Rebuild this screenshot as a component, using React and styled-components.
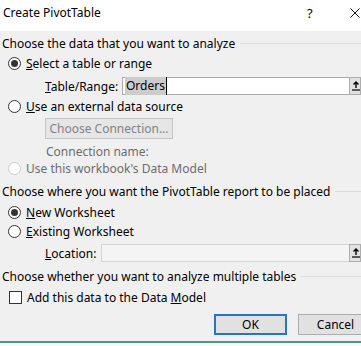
import styled, { createGlobalStyle } from 'styled-components'

const GlobalStyle = createGlobalStyle`
  html, body {
    margin: 0;
    padding: 0;
    background: #ffffff;
  }
  body {
    font-family: 'Noto Sans', 'Open Sans', sans-serif;
    font-size: 12px;
    color: #000000;
  }
`

const Dialog = styled.div`
  width: 361px;
  height: 346px;
  overflow: hidden;
  display: flex;
  flex-direction: column;
  background: #ffffff;
`

const TitleBar = styled.div`
  height: 31px;
  display: flex;
  align-items: center;
  padding: 0 0 6px 3px;
  box-sizing: border-box;
  background: #ffffff;
`

const Title = styled.div`
  flex: 1;
  font-size: 12px;
`

const HelpButton = styled.div`
  width: 10px;
  margin-right: 33px;
  font-size: 13px;
`

const CloseButton = styled.div`
  width: 10px;
  height: 10px;
  margin-right: 1px;
  display: flex;
`

const Body = styled.div`
  background: #f0f0f0;
  display: flex;
  flex-direction: column;
  flex: 1;
`

const Heading = styled.div`
  height: 24px;
  margin-top: ${p => p.$top || 0}px;
  display: flex;
  align-items: center;
  padding-left: 2px;
  white-space: nowrap;

  &::after {
    content: '';
    flex: 1;
    height: 1px;
    background: #dcdcdc;
    margin-left: 5px;
  }
`

const Row = styled.div`
  height: ${p => p.$h || 16}px;
  margin-top: ${p => p.$top || 0}px;
  padding-left: ${p => p.$indent || 8}px;
  display: flex;
  align-items: center;
  white-space: nowrap;
  color: ${p => (p.$disabled ? '#6d6d6d' : '#000000')};
`

const Radio = styled.span`
  width: 13px;
  height: 13px;
  box-sizing: border-box;
  border-radius: 50%;
  border: 1px solid ${p => (p.$disabled ? '#cccccc' : '#333333')};
  background: #ffffff;
  margin-right: 5px;
  display: flex;
  align-items: center;
  justify-content: center;

  &::after {
    content: '';
    width: 7px;
    height: 7px;
    border-radius: 50%;
    background: #333333;
    display: ${p => (p.$checked ? 'block' : 'none')};
  }
`

const Checkbox = styled.span`
  width: 13px;
  height: 13px;
  box-sizing: border-box;
  border: 1px solid #333333;
  background: #ffffff;
  margin: 0 5px 0 1px;
`

const FieldLabel = styled.span`
  width: ${p => p.$w}px;
`

const Field = styled.div`
  flex: 1;
  height: 100%;
  box-sizing: border-box;
  border: 1px solid ${p => (p.$disabled ? '#d4d4d4' : '#ababab')};
  border-right: none;
  background: ${p => (p.$disabled ? '#f4f4f4' : '#ffffff')};
  display: flex;
  align-items: center;
  padding-left: 2px;
`

const Selected = styled.span`
  background: #cccccc;
  padding: 0 1px 1px;
  border-right: 1px solid #000000;
`

const RangeButton = styled.div`
  width: 12px;
  height: 100%;
  box-sizing: border-box;
  border: 1px solid #adadad;
  background: #e1e1e1;
  display: flex;
  align-items: center;
  padding-left: 2px;
`

const PushButton = styled.div`
  width: ${p => p.$w}px;
  height: ${p => p.$h || 21}px;
  box-sizing: border-box;
  display: flex;
  align-items: center;
  justify-content: center;
  background: ${p => (p.$disabled ? '#e6e6e6' : '#e1e1e1')};
  border: ${p => (p.$default ? '2px solid #2b74bf' : p.$disabled ? '1px solid #c4c4c4' : '1px solid #adadad')};
  color: ${p => (p.$disabled ? '#838383' : '#000000')};
  flex-shrink: 0;
`

const ButtonBar = styled.div`
  margin-top: 9px;
  display: flex;
  gap: 11px;
  padding-left: 214px;
`

const BottomEdge = styled.div`
  margin-top: 6px;
  height: 2px;
  background: #5f918c;
`

const Tail = styled.div`
  flex: 1;
  background: #f7f9f8;
`

const CollapseIcon = () => (
  <svg width="8" height="10" viewBox="0 0 8 10">
    <path d="M4 1 L4 7 M1.5 3.5 L4 1 L6.5 3.5" stroke="#000" strokeWidth="1.4" fill="none" />
    <path d="M0 9 H8" stroke="#000" strokeWidth="1.2" />
  </svg>
)

export default function App() {
  return (
    <Dialog>
      <GlobalStyle />
      <TitleBar>
        <Title>Create PivotTable</Title>
        <HelpButton>?</HelpButton>
        <CloseButton>
          <svg width="10" height="10" viewBox="0 0 10 10">
            <path d="M0.5 0.5 L9.5 9.5 M9.5 0.5 L0.5 9.5" stroke="#111" strokeWidth="1" />
          </svg>
        </CloseButton>
      </TitleBar>
      <Body>
        <Heading>Choose the data that you want to analyze</Heading>
        <Row>
          <Radio $checked />
          <span><u>S</u>elect a table or range</span>
        </Row>
        <Row $h={18} $top={6} $indent={45}>
          <FieldLabel $w={77}><u>T</u>able/Range:</FieldLabel>
          <Field>
            <Selected>Orders</Selected>
          </Field>
          <RangeButton><CollapseIcon /></RangeButton>
        </Row>
        <Row $top={3}>
          <Radio />
          <span><u>U</u>se an external data source</span>
        </Row>
        <Row $h={21} $top={4} $indent={45}>
          <PushButton $w={128} $disabled>Choose Connection...</PushButton>
        </Row>
        <Row $top={4} $indent={46} $disabled>Connection name:</Row>
        <Row $top={1} $disabled>
          <Radio $disabled />
          <span>Use this workbook's Data Model</span>
        </Row>
        <Heading $top={3}>Choose where you want the PivotTable report to be placed</Heading>
        <Row $top={1}>
          <Radio $checked />
          <span><u>N</u>ew Worksheet</span>
        </Row>
        <Row $top={3}>
          <Radio />
          <span><u>E</u>xisting Worksheet</span>
        </Row>
        <Row $h={18} $top={5} $indent={45}>
          <FieldLabel $w={56}><u>L</u>ocation:</FieldLabel>
          <Field $disabled />
          <RangeButton><CollapseIcon /></RangeButton>
        </Row>
        <Heading $top={2}>Choose whether you want to analyze multiple tables</Heading>
        <Row $top={1}>
          <Checkbox />
          <span>Add this data to the Data <u>M</u>odel</span>
        </Row>
        <ButtonBar>
          <PushButton $w={73} $h={21} $default>OK</PushButton>
          <PushButton $w={75} $h={21}>Cancel</PushButton>
        </ButtonBar>
        <BottomEdge />
        <Tail />
      </Body>
    </Dialog>
  )
}
